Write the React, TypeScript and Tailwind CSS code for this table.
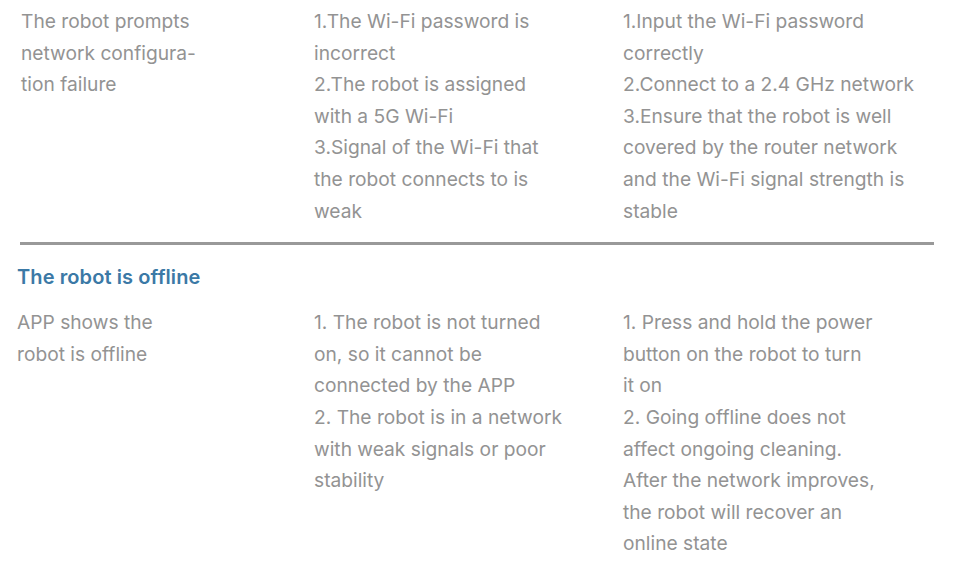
const rows = {
  config: {
    problem: ["The robot prompts", "network configura-", "tion failure"],
    causes: [
      "1.The Wi-Fi password is",
      "incorrect",
      "2.The robot is assigned",
      "with a 5G Wi-Fi",
      "3.Signal of the Wi-Fi that",
      "the robot connects to is",
      "weak",
    ],
    fixes: [
      "1.Input the Wi-Fi password",
      "correctly",
      "2.Connect to a 2.4 GHz network",
      "3.Ensure that the robot is well",
      "covered by the router network",
      "and the Wi-Fi signal strength is",
      "stable",
    ],
  },
  offline: {
    problem: ["APP shows the", "robot is offline"],
    causes: [
      "1. The robot is not turned",
      "on, so it cannot be",
      "connected by the APP",
      "2. The robot is in a network",
      "with weak signals or poor",
      "stability",
    ],
    fixes: [
      "1. Press and hold the power",
      "button on the robot to turn",
      "it on",
      "2. Going offline does not",
      "affect ongoing cleaning.",
      "After the network improves,",
      "the robot will recover an",
      "online state",
    ],
  },
};

const Lines = ({ lines }: { lines: string[] }) => (
  <div>
    {lines.map((l) => (
      <div key={l} className="whitespace-nowrap">
        {l}
      </div>
    ))}
  </div>
);

export default function App() {
  return (
    <div
      className="min-h-screen bg-white pl-[17px] pr-[26px] text-[19.2px] leading-[31.6px] text-[#939393]"
      style={{ fontFamily: "Inter, 'Noto Sans', sans-serif" }}
    >
      {/* Network configuration */}
      <div className="grid grid-cols-[297px_309px_1fr] pt-[6px] pb-[15px]">
        <div className="pl-1">
          <Lines lines={rows.config.problem} />
        </div>
        <Lines lines={rows.config.causes} />
        <Lines lines={rows.config.fixes} />
      </div>

      <div className="ml-[3px] h-[3px] bg-[#999999]" />

      {/* Offline */}
      <h3 className="mt-[18px] text-[20px] font-semibold leading-[28px] tracking-[0.1px] text-[#3b79a6]">
        The robot is offline
      </h3>
      <div className="mt-[16px] grid grid-cols-[297px_309px_1fr]">
        <Lines lines={rows.offline.problem} />
        <Lines lines={rows.offline.causes} />
        <Lines lines={rows.offline.fixes} />
      </div>
    </div>
  );
}
